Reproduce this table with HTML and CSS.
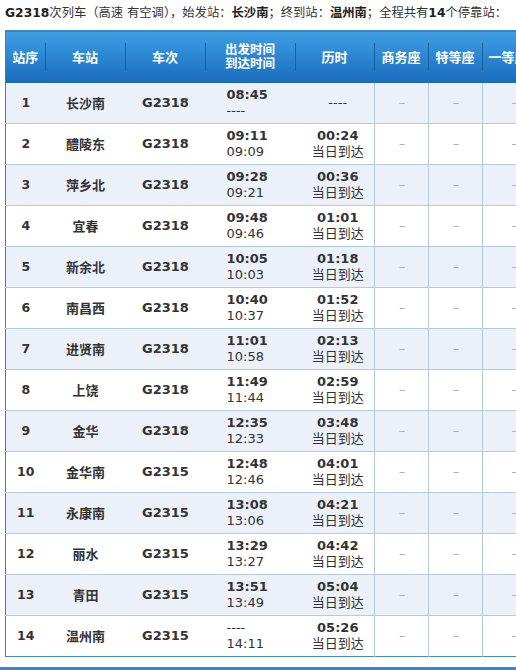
FILE: index.html
```html
<!DOCTYPE html>
<html>
<head>
<meta charset="utf-8">
<link rel="stylesheet" href="styles.css">
</head>
<body>
<div class="title"><b>G2318</b>次列车（高速 有空调），始发站：<b>长沙南</b>；终到站：<b>温州南</b>；全程共有<b>14</b>个停靠站：</div>
<div class="wrap">
<table class="tt">
<colgroup>
<col class="c1"><col class="c2"><col class="c3"><col class="c4"><col class="c5"><col class="c6"><col class="c7"><col class="c8">
</colgroup>
<thead>
<tr>
<th><span class="sep">站序</span></th>
<th><span class="sep">车站</span></th>
<th><span class="sep">车次</span></th>
<th><span class="sep two">出发时间<br>到达时间</span></th>
<th><span class="sep">历时</span></th>
<th><span class="sep">商务座</span></th>
<th><span class="sep">特等座</span></th>
<th><span class="sep last">一等座</span></th>
</tr>
</thead>
<tbody>
<tr class="odd"><td class="no">1</td><td class="st">长沙南</td><td class="tr">G2318</td><td class="tm"><b>08:45</b><br>----</td><td class="du">----</td><td class="seat">--</td><td class="seat">--</td><td class="seat">--</td></tr>
<tr><td class="no">2</td><td class="st">醴陵东</td><td class="tr">G2318</td><td class="tm"><b>09:11</b><br>09:09</td><td class="du"><b>00:24</b><br>当日到达</td><td class="seat">--</td><td class="seat">--</td><td class="seat">--</td></tr>
<tr class="odd"><td class="no">3</td><td class="st">萍乡北</td><td class="tr">G2318</td><td class="tm"><b>09:28</b><br>09:21</td><td class="du"><b>00:36</b><br>当日到达</td><td class="seat">--</td><td class="seat">--</td><td class="seat">--</td></tr>
<tr><td class="no">4</td><td class="st">宜春</td><td class="tr">G2318</td><td class="tm"><b>09:48</b><br>09:46</td><td class="du"><b>01:01</b><br>当日到达</td><td class="seat">--</td><td class="seat">--</td><td class="seat">--</td></tr>
<tr class="odd"><td class="no">5</td><td class="st">新余北</td><td class="tr">G2318</td><td class="tm"><b>10:05</b><br>10:03</td><td class="du"><b>01:18</b><br>当日到达</td><td class="seat">--</td><td class="seat">--</td><td class="seat">--</td></tr>
<tr><td class="no">6</td><td class="st">南昌西</td><td class="tr">G2318</td><td class="tm"><b>10:40</b><br>10:37</td><td class="du"><b>01:52</b><br>当日到达</td><td class="seat">--</td><td class="seat">--</td><td class="seat">--</td></tr>
<tr class="odd"><td class="no">7</td><td class="st">进贤南</td><td class="tr">G2318</td><td class="tm"><b>11:01</b><br>10:58</td><td class="du"><b>02:13</b><br>当日到达</td><td class="seat">--</td><td class="seat">--</td><td class="seat">--</td></tr>
<tr><td class="no">8</td><td class="st">上饶</td><td class="tr">G2318</td><td class="tm"><b>11:49</b><br>11:44</td><td class="du"><b>02:59</b><br>当日到达</td><td class="seat">--</td><td class="seat">--</td><td class="seat">--</td></tr>
<tr class="odd"><td class="no">9</td><td class="st">金华</td><td class="tr">G2318</td><td class="tm"><b>12:35</b><br>12:33</td><td class="du"><b>03:48</b><br>当日到达</td><td class="seat">--</td><td class="seat">--</td><td class="seat">--</td></tr>
<tr><td class="no">10</td><td class="st">金华南</td><td class="tr">G2315</td><td class="tm"><b>12:48</b><br>12:46</td><td class="du"><b>04:01</b><br>当日到达</td><td class="seat">--</td><td class="seat">--</td><td class="seat">--</td></tr>
<tr class="odd"><td class="no">11</td><td class="st">永康南</td><td class="tr">G2315</td><td class="tm"><b>13:08</b><br>13:06</td><td class="du"><b>04:21</b><br>当日到达</td><td class="seat">--</td><td class="seat">--</td><td class="seat">--</td></tr>
<tr><td class="no">12</td><td class="st">丽水</td><td class="tr">G2315</td><td class="tm"><b>13:29</b><br>13:27</td><td class="du"><b>04:42</b><br>当日到达</td><td class="seat">--</td><td class="seat">--</td><td class="seat">--</td></tr>
<tr class="odd"><td class="no">13</td><td class="st">青田</td><td class="tr">G2315</td><td class="tm"><b>13:51</b><br>13:49</td><td class="du"><b>05:04</b><br>当日到达</td><td class="seat">--</td><td class="seat">--</td><td class="seat">--</td></tr>
<tr><td class="no">14</td><td class="st">温州南</td><td class="tr">G2315</td><td class="tm">----<br>14:11</td><td class="du"><b>05:26</b><br>当日到达</td><td class="seat">--</td><td class="seat">--</td><td class="seat">--</td></tr>
</tbody>
</table>
</div>
<div class="bar"></div>
</body>
</html>
```
FILE: styles.css
```css
html, body {
  margin: 0;
  padding: 0;
  overflow: hidden;
  background: #fff;
}
body {
  width: 516px;
  height: 670px;
  font-family: "DejaVu Sans", "Noto Sans CJK SC", sans-serif;
  color: #333;
  position: relative;
}
.title {
  font-size: 12.3px;
  line-height: 16px;
  padding: 5px 0 0 5px;
  height: 25px;
  box-sizing: border-box;
  white-space: nowrap;
  color: #333;
}
.title b { font-weight: bold; color: #222; }
.wrap {
  padding-left: 5px;
  width: 511px;
  overflow: hidden;
}
.tt {
  border-collapse: collapse;
  table-layout: fixed;
  width: 540px;
  border-left: 1px solid #3b7fbd;
  border-bottom: 1px solid #4a88c0;
  margin-top: 5px;
}
.c1 { width: 40px; }
.c2 { width: 80px; }
.c3 { width: 80px; }
.c4 { width: 90px; }
.c5 { width: 79px; }
.c6 { width: 54px; }
.c7 { width: 54px; }
.c8 { width: 63px; }
.tt thead th {
  height: 52px;
  padding: 0;
  background: linear-gradient(#3f9fe2 0%, #2f8ad5 40%, #1f72c2 85%, #1b6ab8 100%);
  color: #fff;
  font-size: 13px;
  font-weight: bold;
  line-height: 13px;
  text-align: center;
  vertical-align: middle;
  border-top: 1px solid #3c89cf;
  overflow: hidden;
}
.tt thead th .sep {
  display: flex;
  align-items: center;
  justify-content: center;
  height: 28px;
  border-right: 1px solid #1a5e9e;
  white-space: nowrap;
}
.tt thead th .sep.two { line-height: 14px; font-size: 12.5px; }
.tt thead th .sep.last { border-right: 0; justify-content: flex-start; padding-left: 6px; }
.tt tbody td {
  height: 40px;
  padding: 0;
  border-bottom: 1px solid #b3cbe2;
  font-size: 13px;
  line-height: 16px;
  color: #333;
  text-align: center;
  vertical-align: middle;
  white-space: nowrap;
}
.tt tbody tr.odd td { background: #ecf1f9; }
.tt tbody tr:last-child td { border-bottom: 0; }
.tt td.no { font-weight: bold; font-size: 12.5px; }
.tt td.st { font-weight: bold; font-family: "Noto Sans CJK SC", sans-serif; }
.tt td.tr { font-weight: bold; }
.tt td.tm { text-align: left; padding-left: 21px; }
.tt td.tm b, .tt td.du b { font-weight: bold; }
.tt td.du {
  border-right: 1px solid #b3cbe2;
  padding-left: 6px;
}
.tt td.seat {
  border-right: 1px solid #b3cbe2;
  color: #aaa;
  font-size: 10px;
  letter-spacing: -1px;
}
.bar {
  position: absolute;
  left: 0;
  top: 667px;
  width: 516px;
  height: 3px;
  background: #3d86c5;
}
```
